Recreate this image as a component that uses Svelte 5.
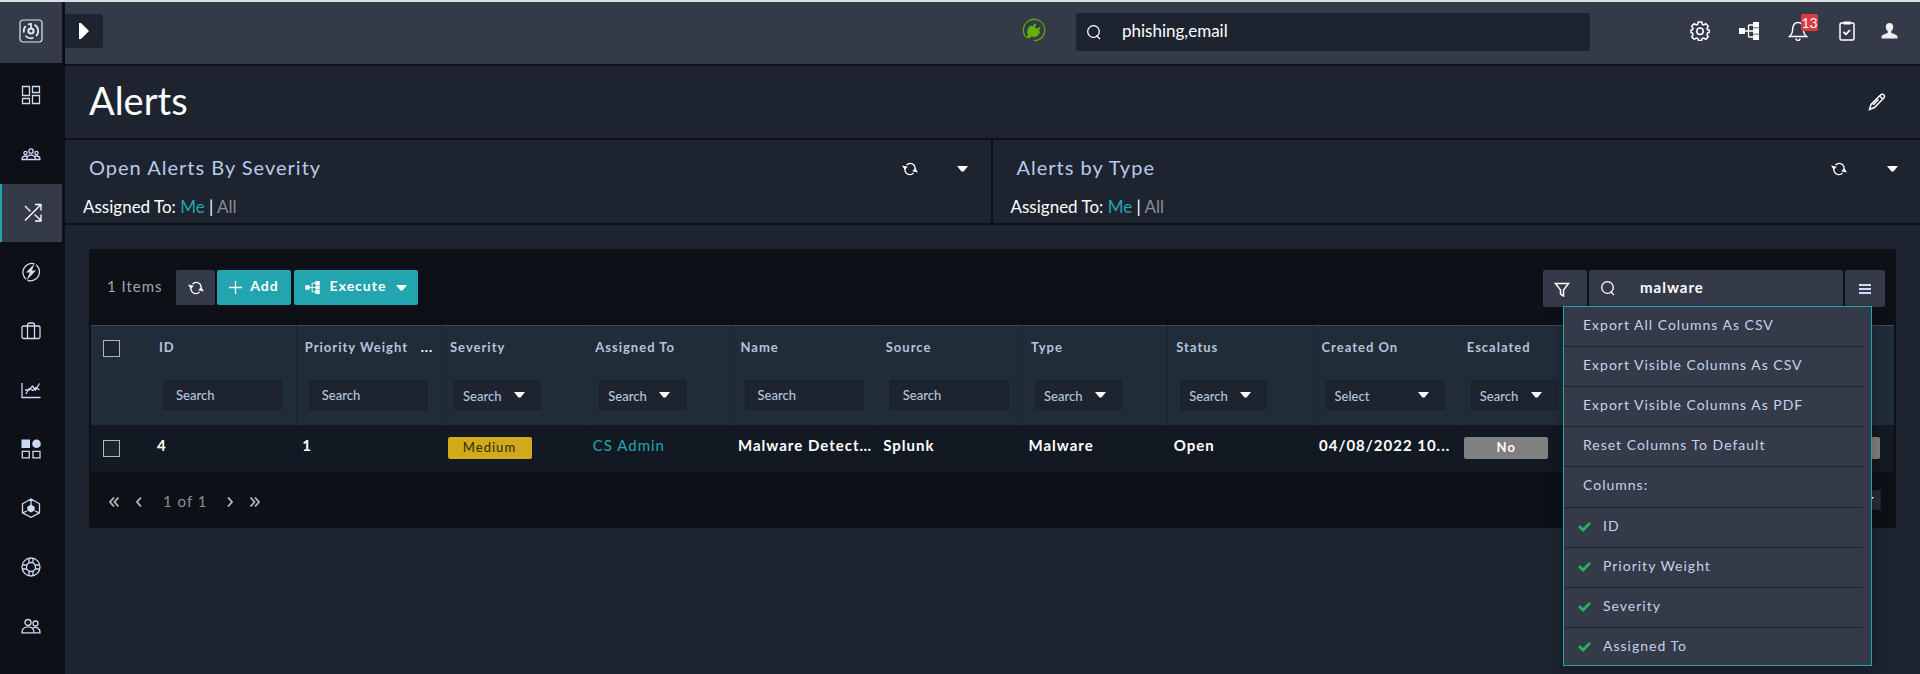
<script>
	let globalSearch = $state('phishing,email');
	let tableSearch = $state('malware');
	let menuOpen = $state(true);
	let assigned = $state(['Me', 'Me']);

	const nav = [
		'dashboard',
		'queue',
		'alerts',
		'incidents',
		'cases',
		'reports',
		'widgets',
		'automation',
		'help',
		'people'
	];

	const widgets = ['Open Alerts By Severity', 'Alerts by Type'];

	const columns = [
		{ label: 'ID', filter: 'text' },
		{ label: 'Priority Weight', filter: 'text', more: true },
		{ label: 'Severity', filter: 'select' },
		{ label: 'Assigned To', filter: 'select' },
		{ label: 'Name', filter: 'text' },
		{ label: 'Source', filter: 'text' },
		{ label: 'Type', filter: 'select' },
		{ label: 'Status', filter: 'select' },
		{ label: 'Created On', filter: 'date' },
		{ label: 'Escalated', filter: 'select' },
		{ label: '' },
		{ label: '' }
	];

	const exportItems = [
		'Export All Columns As CSV',
		'Export Visible Columns As CSV',
		'Export Visible Columns As PDF',
		'Reset Columns To Default'
	];

	const columnItems = ['ID', 'Priority Weight', 'Severity', 'Assigned To'];
</script>

{#snippet refresh()}
	<svg class="icon" width="16" height="14" viewBox="0 0 16 14">
		<path d="M4.500 3.200C7 .2 12.700 1 13.200 6.500V9M11.500 10.800C9 13.800 3.300 13 2.800 7.500V5" />
		<path class="solid" d="M0 3.500l5.800 1.300L2.800 8z M16 10.500l-5.800-1.300L13.200 6z" />
	</svg>
{/snippet}

{#snippet caret()}
	<svg class="caret" width="11" height="6" viewBox="0 0 11 6"><path d="M0 0h11L6.500 5.500h-2z" /></svg>
{/snippet}

{#snippet magnifier()}
	<svg class="icon" width="16" height="16" viewBox="0 0 16 16">
		<circle cx="7.500" cy="7.500" r="5.800" />
		<path d="M10.500 11.500l3.500 3.500" />
	</svg>
{/snippet}

{#snippet tree(w, h)}
	<svg class="icon" width={w} height={h} viewBox="0 0 20 18">
		<path d="M5 9h9M9.500 3v12M9.500 3h5M9.500 15h5" />
		<path class="solid" d="M0 6h6v6H0z M14 0h6v5.500h-6z M14 6.300h6v5.400h-6z M14 12.500h6V18h-6z" />
	</svg>
{/snippet}

{#snippet navIcon(name)}
	<svg class="icon" width="20" height="20" viewBox="0 0 20 20">
		{#if name === 'dashboard'}
			<path d="M1.500 1.500h7v9h-7z M11.500 1.500h7v6h-7z M1.500 13.500h7v5h-7z M11.500 10.500h7v8h-7z" />
		{:else if name === 'queue'}
			<circle cx="10" cy="7" r="2.200" />
			<circle cx="4.500" cy="9" r="1.600" />
			<circle cx="15.500" cy="9" r="1.600" />
			<path d="M1 15.500h18c0-2.500-1.500-3.500-3.500-3.500-1 0-1.500.3-2 .8C12.800 11.500 11.500 11 10 11s-2.800.500-3.500 1.800c-.5-.5-1-.8-2-.8C2.500 12 1 13 1 15.500z M5.500 15.500c0-1.200.4-2 1-2.700 M14.500 15.500c0-1.200-.4-2-1-2.700" />
		{:else if name === 'alerts'}
			<path d="M3 17.500L19 1.500M13 1.500h6v6M3 3l5.500 5.500M12.500 11.500l6.500 6M19 11.500v6.500h-6" />
		{:else if name === 'incidents'}
			<path d="M13.500 1.800A9 9 0 0 0 5 17.200M6.500 18.300A9 9 0 0 0 15 2.700" />
			<path class="solid" d="M13.500 1.500L5 10.500h3.800L5.500 18.500 15 8.500h-4z" />
		{:else if name === 'cases'}
			<rect x="1" y="5" width="18" height="12.500" rx="1.500" />
			<path d="M6.500 17.500V4a2 2 0 0 1 2-2h3a2 2 0 0 1 2 2v13.500" />
		{:else if name === 'reports'}
			<path d="M1 3v14.500h18.500M5 14l3-5.500 4 2 3-3 3.500 2.500M4 10h4l3.500-4 3 4 4-6.500" />
		{:else if name === 'widgets'}
			<path class="solid" d="M.5.500h8.500v8.500h-8.500z" />
			<circle class="solid" cx="15.500" cy="4.800" r="4.300" />
			<path d="M1.300 12.300h7v6.500h-7z M12 12.300h7v6.500h-7z" />
		{:else if name === 'automation'}
			<path d="M10 1l8.500 4.800v9L10 19.300 1.500 14.800v-9z M10 1v7M1.500 14.800L6 13M18.500 14.800L14 13" />
			<path class="solid" d="M10 6.500l3.700 2.200v3.800L10 14.500l-3.700-2V8.700z" />
		{:else if name === 'help'}
			<circle cx="10" cy="10" r="9" />
			<circle cx="10" cy="10" r="4.500" />
			<path d="M8 1.500v4.500M12 1.500v4.500M8 14v4.500M12 14v4.500M1.500 8H6M1.500 12H6M14 8h4.500M14 12h4.500" />
		{:else}
			<circle cx="7" cy="6.500" r="3" />
			<circle cx="14.500" cy="7.500" r="2.500" />
			<path d="M1 16.800c0-4 2-6 6-6s6 2 6 6z M11.500 12c4.500-1.500 7.500.3 7.500 4.800h-6" />
		{/if}
	</svg>
{/snippet}

{#snippet dropdown(label, text, wide)}
	<span class="dropdown" class:wide>
		<select aria-label={label}>
			<option>{text}</option>
		</select>
		{@render caret()}
	</span>
{/snippet}

<div class="app">
	<aside class="sidebar">
		<a class="logo" href="#home" aria-label="Home">
			<svg width="24" height="24" viewBox="0 0 24 24" fill="none" stroke="#e4e8ee">
				<rect x="1" y="1" width="22" height="22" rx="3" stroke-width="1.200" />
				<circle cx="12" cy="12" r="2.600" stroke-width="2" />
				<path d="M6.800 7A7.200 7.200 0 0 0 4.900 13.500M6.500 16.700A7.200 7.200 0 0 0 14.500 18.800M17 17.200A7.200 7.200 0 0 0 15.500 5.700M9 5.500A7.200 7.200 0 0 1 12 4.800M12 4v5" stroke-width="1.700" />
			</svg>
		</a>
		<nav>
			{#each nav as item (item)}
				<a href="#{item}" class:active={item === 'alerts'} aria-label={item}>
					{@render navIcon(item)}
				</a>
			{/each}
		</nav>
	</aside>

	<div class="main">
		<header class="topbar">
			<button class="expand" aria-label="Expand navigation">
				<svg width="10" height="16" viewBox="0 0 10 16"><path d="M0 0h2l8 8-8 8H0z" fill="#fff" /></svg>
			</button>
			<svg class="status" width="24" height="24" viewBox="0 0 24 24">
				<path d="M5 20A10.700 10.700 0 1 1 12 22.700" fill="none" stroke="#5aa70c" stroke-width="1.300" />
				<path d="M4.500 19.500l1.500-2.500c-1.700-3-.5-8 3-9.500l1.500 1 2-3 1.500.8-1 3 2.200 1.500 2.500-2 1 1.200-2 2.500 1.500 1.500c-1.500 4-5.500 6-9 4.500l-2 2z" fill="#62b200" />
			</svg>
			<label class="global-search">
				{@render magnifier()}
				<input type="text" aria-label="Global search" bind:value={globalSearch} />
			</label>
			<div class="actions">
				<button aria-label="Settings">
					<svg class="icon" width="20" height="20" viewBox="0 0 20 20">
						<path stroke-width="1.500" d="M8.200 1h3.600l.6 2.500 1.200.5 2.200-1.300 2.500 2.500L17 7.400l.5 1.200 1.700.4v2.500l-1.700.6-.5 1.500 1.200 2.200-2.400 2.400-2.200-1.200-1.500.6-.5 1.900H8.400l-.6-1.900-1.400-.6-2.200 1.200-2.400-2.400L3 13.600l-.5-1.500L1 11.500V9l1.500-.4L3 7.400 1.700 5.200l2.500-2.500L6.400 4l1.200-.5z" />
						<circle cx="10" cy="10.200" r="3.200" stroke-width="1.500" />
					</svg>
				</button>
				<button aria-label="Playbooks">{@render tree(20, 18)}</button>
				<button class="bell" aria-label="Notifications">
					<svg class="icon" width="20" height="20" viewBox="0 0 20 20">
						<path stroke-width="1.400" d="M1.500 15.500h17c-2.500-2-3-4-3.200-7.500C15 4 13 1.500 10 1.500S5 4 4.700 8C4.500 11.500 4 13.500 1.500 15.500z M8 17.500a2 2 0 0 0 4 0" />
					</svg>
					<span class="count">13</span>
				</button>
				<button aria-label="Tasks">
					<svg class="icon" width="18" height="20" viewBox="0 0 18 20">
						<rect x="2" y="2" width="14" height="17" rx="1.500" stroke-width="1.500" />
						<path class="solid" d="M5.500.5h7v3h-7z" />
						<path stroke-width="1.800" d="M5.500 11l2.500 2.300 4-4.300" />
					</svg>
				</button>
				<button class="user" aria-label="Profile">
					<svg width="17" height="16" viewBox="0 0 17 16">
						<path fill="#eee" d="M8.500 0c2.300 0 3.700 1.500 3.700 4 0 1.800-.8 3.500-2 4.300v1.500c.8 1 6.300 1.500 6.300 4.200v1.500H.5V14c0-2.700 5.500-3.200 6.300-4.200V8.300c-1.200-.8-2-2.500-2-4.300 0-2.500 1.400-4 3.700-4z" />
					</svg>
				</button>
			</div>
		</header>

		<section class="title-bar">
			<h1>Alerts</h1>
			<button aria-label="Edit page">
				<svg class="icon" width="18" height="18" viewBox="0 0 18 18">
					<path stroke-width="1.500" d="M1.500 16.500l1.500-5L12.500 2c1-1.200 2.500-1 3.300-.3s1 2.300 0 3.300L6.500 14.500z M11.500 3l3.500 3M5 12l5.500-5.500" />
				</svg>
			</button>
		</section>

		<section class="widgets">
			{#each widgets as title, i (title)}
				<div class="widget">
					<div class="widget-head">
						<h2>{title}</h2>
						<button aria-label="Refresh {title}">{@render refresh()}</button>
						<button aria-label="Toggle {title}">{@render caret()}</button>
					</div>
					<p>
						Assigned To:
						<a href="#me" class:on={assigned[i] === 'Me'} onclick={() => (assigned[i] = 'Me')}>Me</a> |
						<a href="#all" class:on={assigned[i] === 'All'} onclick={() => (assigned[i] = 'All')}>All</a>
					</p>
				</div>
			{/each}
		</section>

		<main class="content">
			<div class="panel">
				<div class="toolbar">
					<span class="items">1 Items</span>
					<button class="btn" aria-label="Refresh list">{@render refresh()}</button>
					<button class="btn primary add">
						<svg class="icon" width="13" height="13" viewBox="0 0 13 13"><path d="M6.500 0v13M0 6.500h13" /></svg>
						<span>Add</span>
					</button>
					<button class="btn primary execute">
						{@render tree(15, 13)}
						<span>Execute</span>
						{@render caret()}
					</button>

					<div class="tools">
						<button class="tool filter-toggle" aria-label="Filter">
							<svg class="icon" width="16" height="16" viewBox="0 0 16 16">
								<path stroke-width="1.500" d="M1.500 2.500h13L9.500 9v6l-3-2V9z" />
							</svg>
						</button>
						<label class="table-search">
							{@render magnifier()}
							<input type="text" aria-label="Search table" bind:value={tableSearch} />
						</label>
						<button class="tool" aria-label="Table options" aria-expanded={menuOpen} onclick={() => (menuOpen = !menuOpen)}>
							<svg width="12" height="10" viewBox="0 0 12 10"><path d="M0 0h12v2H0z M0 4h12v2H0z M0 8h12v2H0z" fill="#cfdcf3" /></svg>
						</button>

						{#if menuOpen}
							<ul class="menu">
								{#each exportItems as item (item)}
									<li><button>{item}</button></li>
								{/each}
								<li class="caption">Columns:</li>
								{#each columnItems as item (item)}
									<li>
										<button class="checked">
											<svg width="13" height="11" viewBox="0 0 13 11"><path d="M1 5l4 4 7-7" fill="none" stroke="#27ae60" stroke-width="3" /></svg>
											{item}
										</button>
									</li>
								{/each}
							</ul>
						{/if}
					</div>
				</div>

				<table>
					<colgroup>
						<col class="pick" />
						{#each columns as _}
							<col />
						{/each}
					</colgroup>
					<thead>
						<tr>
							<th class="pick"><input type="checkbox" aria-label="Select all rows" /></th>
							{#each columns as column}
								<th>
									<div class="label">
										<span>{column.label}</span>
										{#if column.more}<b>...</b>{/if}
									</div>
									{#if column.filter === 'text'}
										<input class="filter" type="text" placeholder="Search" aria-label="Filter {column.label}" />
									{:else if column.filter === 'select'}
										{@render dropdown(`Filter ${column.label}`, 'Search', false)}
									{:else if column.filter === 'date'}
										{@render dropdown(`Filter ${column.label}`, 'Select', true)}
									{/if}
								</th>
							{/each}
						</tr>
					</thead>
					<tbody>
						<tr>
							<td class="pick"><input type="checkbox" aria-label="Select alert 4" /></td>
							<td>4</td>
							<td>1</td>
							<td><span class="badge medium">Medium</span></td>
							<td><a href="#cs-admin">CS Admin</a></td>
							<td>Malware Detect...</td>
							<td>Splunk</td>
							<td>Malware</td>
							<td>Open</td>
							<td>04/08/2022 10...</td>
							<td><span class="badge">No</span></td>
							<td></td>
							<td><span class="badge full"></span></td>
						</tr>
					</tbody>
				</table>

				<footer class="pager">
					<button aria-label="First page"><svg width="10" height="10" viewBox="0 0 10 10"><path d="M5 .5L1 5l4 4.500M9.500.5l-4 4.500 4 4.500" /></svg></button>
					<button aria-label="Previous page"><svg width="6" height="10" viewBox="0 0 6 10"><path d="M5 .5L1 5l4 4.500" /></svg></button>
					<span>1 of 1</span>
					<button aria-label="Next page"><svg width="6" height="10" viewBox="0 0 6 10"><path d="M1 .5L5 5 1 9.500" /></svg></button>
					<button aria-label="Last page"><svg width="10" height="10" viewBox="0 0 10 10"><path d="M.5.500l4 4.500-4 4.500M5 .5L9 5 5 9.500" /></svg></button>
					<label class="page-size">
						<select aria-label="Rows per page"><option>30</option></select>
						{@render caret()}
					</label>
				</footer>
			</div>
		</main>
	</div>
</div>

<style>
	:global(body) {
		margin: 0;
		background: #0d1117;
	}
	.app {
		display: flex;
		gap: 3px;
		box-sizing: border-box;
		min-height: 100vh;
		border-top: 2px solid #d9dee1;
		background: #0d1117;
		color: #fff;
		font: 17px/20px Lato, sans-serif;
	}
	.app :global(*) {
		box-sizing: border-box;
	}
	button,
	input,
	select {
		margin: 0;
		padding: 0;
		border: 0;
		border-radius: 0;
		background: none;
		color: inherit;
		font: inherit;
		letter-spacing: inherit;
		outline: 0;
	}
	button {
		display: flex;
		align-items: center;
		justify-content: center;
		cursor: pointer;
	}
	select {
		appearance: none;
	}
	a {
		color: #22a5af;
		text-decoration: none;
	}
	svg {
		display: block;
		flex: none;
	}
	.icon {
		fill: none;
		stroke: currentColor;
		stroke-width: 1.3;
	}
	.icon .solid {
		fill: currentColor;
		stroke: none;
	}
	.caret {
		fill: #fff;
	}

	.sidebar {
		flex: none;
		width: 62px;
	}
	.logo {
		display: flex;
		align-items: center;
		justify-content: center;
		height: 61px;
		padding-bottom: 3px;
		background: #343a48;
	}
	nav {
		display: grid;
		gap: 1px;
		padding-top: 3px;
	}
	nav a {
		display: flex;
		align-items: center;
		justify-content: center;
		height: 58px;
		color: #cbd9f1;
	}
	nav a.active {
		border-left: 2px solid #22a5af;
		background: #343a48;
		color: #fff;
	}

	.main {
		display: flex;
		flex: 1;
		flex-direction: column;
		gap: 2px;
		min-width: 0;
	}
	.topbar {
		display: flex;
		align-items: center;
		height: 62px;
		padding-right: 22px;
		background: #343a48;
	}
	.expand {
		width: 38px;
		height: 34px;
		margin: 0 auto 4px 0;
		border-radius: 0 2px 2px 0;
		background: #1d2430;
	}
	.status {
		margin: 0 30px 6px 0;
	}
	.global-search {
		display: flex;
		flex: 0 1 514px;
		align-items: center;
		gap: 20px;
		height: 38px;
		margin-bottom: 2px;
		padding-left: 10px;
		border-radius: 2px;
		background: #1d2430;
	}
	.global-search input,
	.table-search input {
		flex: 1;
		min-width: 0;
		padding-bottom: 3px;
	}
	.actions {
		display: flex;
		gap: 20px;
		margin: 0 0 5px 95px;
	}
	.actions button {
		width: 29px;
		height: 30px;
	}
	.actions .user {
		width: 17px;
	}
	.bell {
		position: relative;
	}
	.count {
		position: absolute;
		top: -2px;
		right: -6px;
		width: 17px;
		border-radius: 2px;
		background: #dc3a40;
		font-size: 14px;
		line-height: 17px;
		text-align: center;
	}

	.title-bar {
		display: flex;
		align-items: center;
		justify-content: space-between;
		height: 72px;
		padding: 0 34px 0 24px;
		background: #1d2430;
	}
	h1 {
		margin: 0;
		padding-bottom: 4px;
		font-size: 38px;
		font-weight: 400;
		line-height: 68px;
	}

	.widgets {
		display: grid;
		grid-template-columns: 1fr 1fr;
	}
	.widget {
		height: 83px;
		background: #1d2430;
	}
	.widget:first-child {
		border-right: 2px solid #0d1117;
	}
	.widget-head {
		display: flex;
		align-items: center;
		height: 58px;
		padding: 0 16px 0 24px;
	}
	h2 {
		flex: 1;
		margin: 0;
		padding-bottom: 4px;
		color: #b9cae8;
		font-size: 20px;
		font-weight: 400;
		letter-spacing: 1px;
	}
	.widget-head button {
		width: 24px;
		height: 24px;
		margin-left: 29px;
	}
	.widget p {
		margin: 0;
		padding-left: 18px;
		line-height: 18px;
	}
	.widget a {
		color: #8b8d90;
	}
	.widget a.on {
		color: #22a5af;
	}

	.content {
		flex: 1;
		padding: 24px;
		background: #1d2430;
	}
	.panel {
		padding: 0 2px;
		border-radius: 3px;
		background: #0d1117;
		font-size: 15px;
		letter-spacing: 1px;
	}
	.toolbar {
		display: flex;
		align-items: flex-start;
		height: 76px;
		padding: 21px 9px 0 16px;
	}
	.items {
		width: 69px;
		color: #a3a5a7;
		line-height: 33px;
	}
	.btn {
		height: 35px;
		width: 39px;
		margin-right: 2px;
		border-radius: 2px;
		background: #343a48;
		font-size: 14px;
		font-weight: 700;
	}
	.btn span {
		padding-bottom: 3px;
	}
	.btn.primary {
		gap: 8px;
		background: #22a5af;
	}
	.btn.add {
		width: 74px;
		margin-right: 3px;
	}
	.btn.execute {
		gap: 10px;
		width: 124px;
	}
	.tools {
		position: relative;
		display: flex;
		gap: 2px;
		margin-left: auto;
	}
	.tool {
		width: 40px;
		height: 37px;
		border-radius: 2px;
		background: #343a48;
	}
	.filter-toggle {
		width: 44px;
		padding-right: 6px;
	}
	.table-search {
		display: flex;
		align-items: center;
		gap: 24px;
		width: 254px;
		height: 36px;
		padding-left: 11px;
		border-radius: 2px;
		background: #343a48;
	}
	.table-search input {
		font-weight: 700;
	}

	.menu {
		position: absolute;
		top: 36px;
		right: 13px;
		z-index: 1;
		width: 309px;
		margin: 0;
		padding: 0 8px 0 0;
		border: 1px solid #22a5af;
		background: #343a48;
		box-shadow: 0 6px 14px rgba(0, 0, 0, 0.3);
		color: #c3d2ec;
		font-size: 14px;
		list-style: none;
	}
	.menu li {
		height: 40px;
		border-bottom: 1px solid #1d2430;
	}
	.menu li:last-child {
		height: 37px;
		border-bottom: 0;
	}
	.menu button {
		justify-content: flex-start;
		width: 100%;
		height: 38px;
		padding: 0 0 2px 19px;
	}
	.menu .checked {
		gap: 12px;
		padding-left: 14px;
	}
	.menu .caption {
		height: 41px;
		padding-left: 19px;
		line-height: 36px;
	}

	table {
		width: 100%;
		border-collapse: collapse;
		table-layout: fixed;
	}
	col.pick {
		width: 60px;
	}
	thead {
		border-top: 1px solid #3d4863;
		background: #212c39;
	}
	th {
		height: 99px;
		padding: 11px 8px 0;
		border-right: 1px solid #1c2632;
		color: #b5c4da;
		font-size: 13px;
		font-weight: 700;
		text-align: left;
		vertical-align: top;
	}
	th:last-child,
	th.pick {
		border-right: 0;
	}
	.label {
		display: flex;
		justify-content: space-between;
		height: 43px;
		white-space: nowrap;
	}
	.label b {
		color: #fff;
	}
	.filter,
	.dropdown {
		width: 119px;
		height: 30px;
		margin-left: 4px;
		border: 1px solid #19222c;
		background: #1d2430;
		font-weight: 500;
		letter-spacing: 0;
	}
	.filter {
		padding: 0 0 1px 12px;
	}
	.filter::placeholder {
		color: #b5c4da;
		opacity: 1;
	}
	.dropdown {
		display: flex;
		align-items: center;
		width: 87px;
		border-radius: 2px;
	}
	.dropdown.wide {
		width: 119px;
	}
	.dropdown select,
	.page-size select {
		flex: 1;
		width: 100%;
		height: 28px;
		padding: 2px 0 0 8px;
	}
	.dropdown .caret {
		margin-right: 15px;
	}
	input[type='checkbox'] {
		display: block;
		appearance: none;
		width: 17px;
		height: 17px;
		border: 1px solid #b4b6b5;
		background: #1d2430;
	}
	input[type='checkbox']:checked {
		background: #22a5af;
	}
	th.pick {
		padding: 14px 0 0 12px;
	}
	tbody tr {
		background: #131922;
	}
	td {
		height: 47px;
		padding: 10px 6px 0;
		overflow: hidden;
		font-weight: 700;
		text-overflow: ellipsis;
		vertical-align: top;
		white-space: nowrap;
	}
	td.pick {
		padding: 15px 0 0 12px;
	}
	td a {
		font-weight: 400;
	}
	.badge {
		display: block;
		width: 84px;
		height: 22px;
		margin-top: 2px;
		border-radius: 2px;
		background: #808080;
		font-size: 13px;
		line-height: 21px;
		text-align: center;
	}
	.badge.medium {
		background: #d1aa1b;
		color: #3a310c;
		font-weight: 500;
	}
	.badge.full {
		width: 125px;
	}

	.pager {
		display: flex;
		align-items: center;
		height: 56px;
		padding: 4px 13px 0 16px;
		color: #8b8d90;
	}
	.pager button {
		width: 14px;
		height: 24px;
		margin-right: 11px;
	}
	.pager button path {
		fill: none;
		stroke: #b4b6b8;
		stroke-width: 1.8;
	}
	.pager span {
		margin: 0 16px 2px 6px;
	}
	.page-size {
		display: flex;
		align-items: center;
		width: 60px;
		height: 20px;
		margin: 0 0 4px auto;
		border: 1px solid #1c232d;
		background: #252d38;
	}
	.page-size .caret {
		margin-right: 6px;
	}
</style>
